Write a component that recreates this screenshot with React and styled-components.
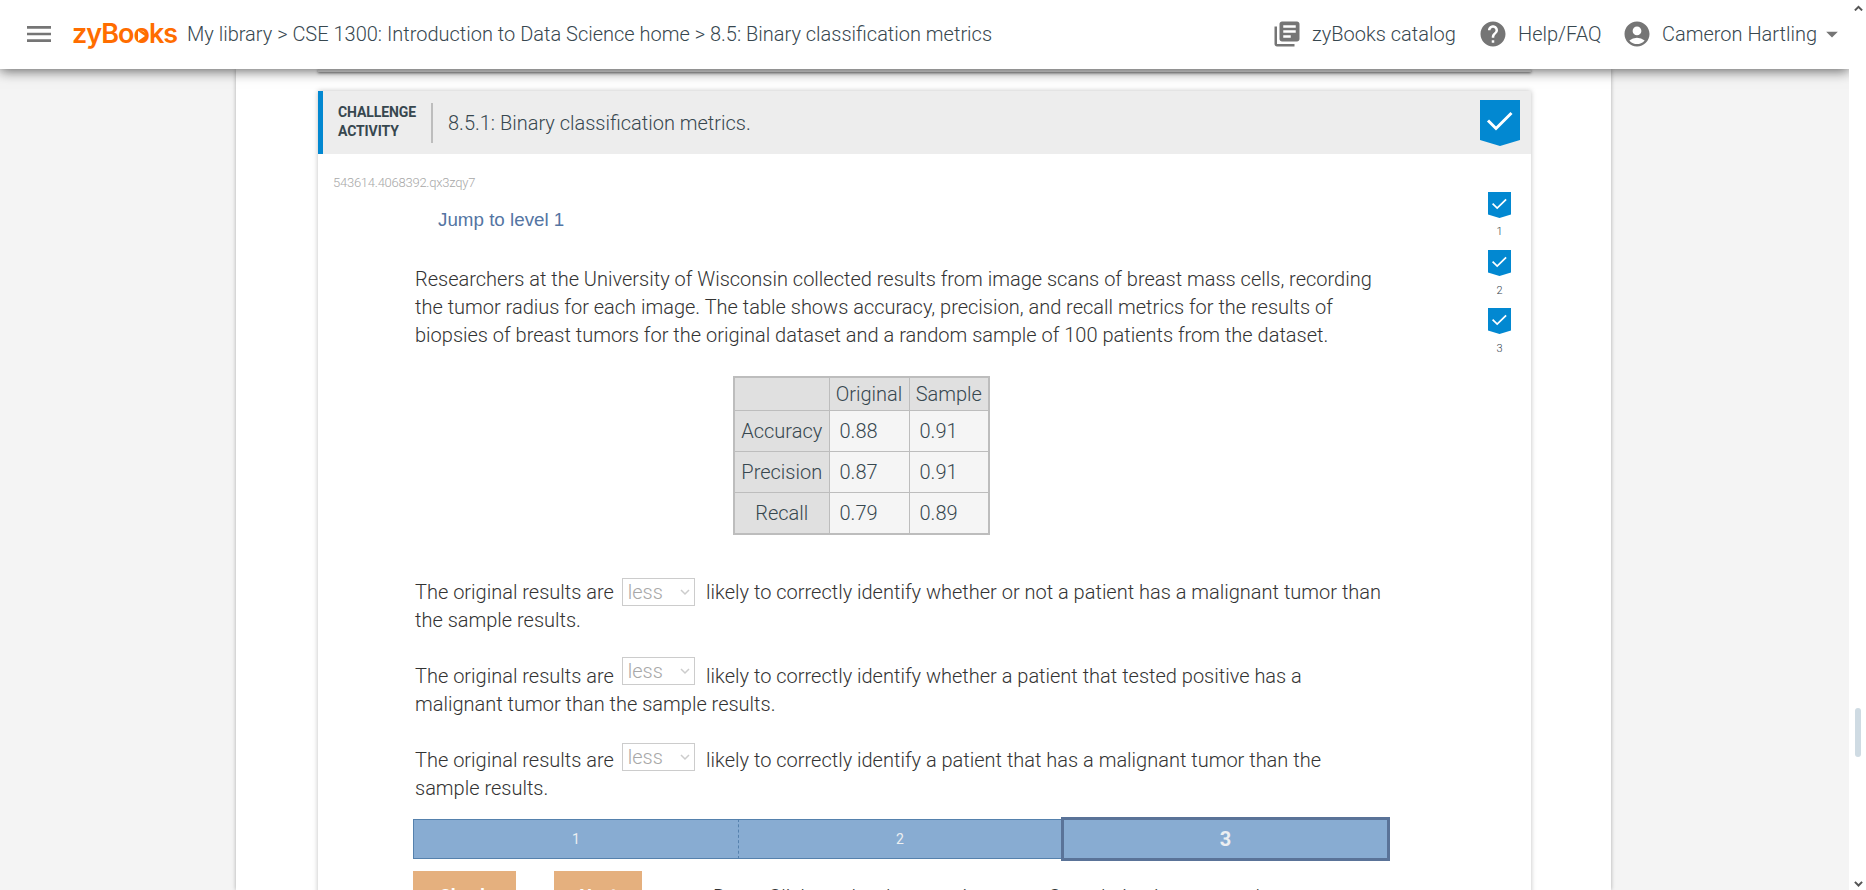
import React from "react";
import styled, { createGlobalStyle } from "styled-components";
import { MdLibraryBooks, MdHelp, MdAccountCircle, MdMenu, MdArrowDropDown } from "react-icons/md";

const Global = createGlobalStyle`
  * { box-sizing: border-box; }
  body { margin: 0; background: #fff; overflow: hidden; font-family: Roboto, "Liberation Sans", sans-serif; font-weight: 300; font-size: 20px; color: #37474f; }
`;

const Screen = styled.div`
  display: grid;
  grid-template-columns: 1849px 17px;
  height: 890px;
  overflow: hidden;
`;
const Page = styled.div`
  display: flex;
  flex-direction: column;
  height: 890px;
  overflow: hidden;
  background: #f4f4f4;
`;
const TopBar = styled.header`
  display: flex;
  align-items: center;
  flex: none;
  height: 69px;
  padding: 0 3px 2px 23px;
  background: #fff;
  box-shadow: 0 2px 12px rgba(0, 0, 0, 0.6);
  position: relative;
  z-index: 2;
  white-space: nowrap;
  svg { color: #757575; flex: none; }
`;
const Logo = styled.span`
  margin-left: 17px;
  width: 115px;
  color: #ff6d00;
  font-family: Inter, Roboto, sans-serif;
  font-size: 27px;
  font-weight: 600;
  letter-spacing: -1px;
`;
const PlayLetter = styled.span`
  position: relative;
  &::before {
    content: "";
    position: absolute;
    left: 3px;
    bottom: 9px;
    width: 10px;
    height: 10px;
    border-radius: 5px;
    background: #ff6d00;
  }
  &::after {
    content: "";
    position: absolute;
    left: 5px;
    bottom: 9px;
    border: solid transparent;
    border-width: 5px 0 5px 7px;
    border-left-color: #fff;
  }
`;
const Crumbs = styled.span`
  flex: 1;
`;
const NavItem = styled.span`
  display: flex;
  align-items: center;
  gap: 10px;
  width: ${(p) => p.$width}px;
`;
const Sheet = styled.main`
  width: 1375px;
  height: 821px;
  margin-left: 236px;
  padding-left: 82px;
  background: #fff;
  box-shadow: 0 0 4px rgba(0, 0, 0, 0.3);
`;
const PreviousCard = styled.div`
  width: 1213px;
  height: 3px;
  margin-bottom: 19px;
  background: #e4e4e4;
  box-shadow: 0 1px 3px rgba(0, 0, 0, 0.55);
`;
const Card = styled.section`
  width: 1213px;
  height: 900px;
  background: #fff;
  box-shadow: 0 0 5px rgba(0, 0, 0, 0.25);
`;
const CardHead = styled.div`
  display: flex;
  align-items: center;
  height: 63px;
  padding-right: 11px;
  background: #ededed;
  border-left: 5px solid #0288d1;
`;
const Kind = styled.div`
  width: 94px;
  padding-left: 15px;
  font-size: 14px;
  font-weight: 700;
  letter-spacing: -0.1px;
  line-height: 19px;
  margin-top: -1px;
`;
const CardTitle = styled.div`
  flex: 1;
  height: 40px;
  line-height: 40px;
  margin-left: 14px;
  padding-left: 15px;
  border-left: 2px solid #bdbdbd;
`;
const CardBody = styled.div`
  display: flex;
  justify-content: space-between;
`;
const Content = styled.div`
  width: 1073px;
`;
const Code = styled.div`
  padding: 20px 0 0 15px;
  font-size: 13px;
  letter-spacing: -0.25px;
  line-height: 17px;
  color: #a8a8a8;
`;
const Jump = styled.div`
  padding: 17px 0 0 120px;
  font-family: "Liberation Sans", Arial, sans-serif;
  font-size: 18.8px;
  font-weight: 400;
  line-height: 24px;
  color: #5475a3;
`;
const Prompt = styled.p`
  width: 976px;
  margin: ${(p) => p.$top}px 0 0 97px;
  line-height: 28px;
  color: #333;
`;
const TableArea = styled.div`
  height: 186px;
  padding: 27px 0 0 415px;
`;
const Table = styled.table`
  width: 257px;
  border-collapse: collapse;
  border: 2px solid #bdbdbd;
  table-layout: fixed;
  th, td { border: 1px solid #bdbdbd; font-weight: 300; padding: 0; }
  th { background: #e0e0e0; text-align: center; height: 33px; }
  td { background: #f5f5f5; height: 41px; padding-left: 10px; }
  tr:last-child td { height: 42px; }
  th:first-child { width: 95px; }
  th:nth-child(2) { width: 80px; }
`;
const Select = styled.span`
  display: inline-flex;
  align-items: center;
  justify-content: space-between;
  width: 73px;
  height: 28px;
  margin: ${(p) => -p.$raise}px 6.5px ${(p) => p.$raise}px 3px;
  padding: 0 4px 0 5px;
  border: 1px solid #ccc;
  color: #a8a8a8;
  vertical-align: top;
`;
const Steps = styled.div`
  display: grid;
  grid-template-columns: 326px 322px 329px;
  align-items: center;
  height: 44px;
  margin: 15px 0 0 95px;
`;
const Step = styled.div`
  display: flex;
  align-items: center;
  justify-content: center;
  height: ${(p) => (p.$current ? 44 : 40)}px;
  background: #88acd2;
  border: ${(p) => (p.$current ? "3px solid #5a7398" : "1px solid #5581ad")};
  border-right: ${(p) => (p.$current ? "3px solid #5a7398" : p.$dash ? "1px dashed #5581ad" : "0")};
  border-left-width: ${(p) => (p.$current ? 3 : p.$dash ? 1 : 0)}px;
  color: #eceff1;
  font-size: ${(p) => (p.$current ? 20 : 14)}px;
  font-weight: ${(p) => (p.$current ? 700 : 400)};
`;
const Actions = styled.div`
  display: flex;
  height: 52px;
  margin: 10px 0 0 95px;
`;
const Button = styled.div`
  width: ${(p) => p.$width}px;
  margin-right: 38px;
  background: #e5b07e;
  color: #fff;
  font-size: 18px;
  font-weight: 700;
  line-height: 49px;
  text-align: center;
`;
const Feedback = styled.span`
  margin-left: 33px;
  line-height: 53px;
  color: #333;
`;
const Levels = styled.div`
  display: flex;
  flex-direction: column;
  width: 23px;
  margin: 38px 20px 0 0;
`;
const Level = styled.div`
  display: flex;
  flex-direction: column;
  align-items: center;
  height: 58px;
  font-size: 11px;
  line-height: 13px;
  gap: 8px;
  &:first-child { gap: 7px; }
  svg { display: block; }
`;
const Scroll = styled.div`
  display: flex;
  flex-direction: column;
  align-items: center;
  justify-content: space-between;
  padding: 5px 0 3px 1px;
  background: #fff;
  svg { display: block; }
`;
const Thumb = styled.div`
  width: 6px;
  height: 49px;
  margin-top: 697px;
  margin-bottom: auto;
  border-radius: 3px;
  background: #cfdbe3;
`;

const Ribbon = ({ w, h }) => (
  <svg width={w} height={h} viewBox="0 0 40 46" preserveAspectRatio="none">
    <path d="M0 0H40V40L20 46L0 40Z" fill="#0288d1" />
    <path d="M8 20.5L16 28.5L31.5 13" fill="none" stroke="#fff" strokeWidth="3" />
  </svg>
);
const Chevron = ({ up, size = 10, color = "#ccc", weight = 1.5 }) => (
  <svg width={size} height={size * 0.7} viewBox="0 0 10 7">
    <path d={up ? "M1 6L5 2L9 6" : "M1 1L5 5L9 1"} fill="none" stroke={color} strokeWidth={weight} />
  </svg>
);

const rows = [["Accuracy", "0.88", "0.91"], ["Precision", "0.87", "0.91"], ["Recall", "0.79", "0.89"]];
const questions = [
  { raise: 0, top: 43, end: <>likely to correctly identify whether or not a patient has a malignant tumor than<br />the sample results.</> },
  { raise: 5, top: 28, end: <>likely to correctly identify whether a patient that tested positive has a<br />malignant tumor than the sample results.</> },
  { raise: 3, top: 28, end: <>likely to correctly identify a patient that has a malignant tumor than the<br />sample results.</> },
];

export default function App() {
  return (
    <Screen>
      <Global />
      <Page>
        <TopBar>
          <MdMenu size={32} />
          <Logo>zyBo<PlayLetter>o</PlayLetter>ks</Logo>
          <Crumbs>My library &gt; CSE 1300: Introduction to Data Science home &gt; 8.5: Binary classification metrics</Crumbs>
          <NavItem $width={206}><MdLibraryBooks size={30} />zyBooks catalog</NavItem>
          <NavItem $width={144}><MdHelp size={30} />Help/FAQ</NavItem>
          <NavItem $width={196}><MdAccountCircle size={30} />Cameron Hartling</NavItem>
          <MdArrowDropDown size={28} />
        </TopBar>
        <Sheet>
          <PreviousCard />
          <Card>
            <CardHead>
              <Kind>CHALLENGE ACTIVITY</Kind>
              <CardTitle>8.5.1: Binary classification metrics.</CardTitle>
              <Ribbon w={40} h={46} />
            </CardHead>
            <CardBody>
              <Content>
                <Code>543614.4068392.qx3zqy7</Code>
                <Jump>Jump to level 1</Jump>
                <Prompt $top={33}>
                  Researchers at the University of Wisconsin collected results from image scans of breast mass cells, recording<br />
                  the tumor radius for each image. The table shows accuracy, precision, and recall metrics for the results of<br />
                  biopsies of breast tumors for the original dataset and a random sample of 100 patients from the dataset.
                </Prompt>
                <TableArea>
                  <Table>
                    <thead><tr><th /><th>Original</th><th>Sample</th></tr></thead>
                    <tbody>
                      {rows.map(([name, a, b]) => (
                        <tr key={name}><th>{name}</th><td>{a}</td><td>{b}</td></tr>
                      ))}
                    </tbody>
                  </Table>
                </TableArea>
                {questions.map((q, i) => (
                  <Prompt key={i} $top={q.top}>
                    The original results are <Select $raise={q.raise}>less<Chevron /></Select> {q.end}
                  </Prompt>
                ))}
                <Steps>
                  <Step $dash>1</Step>
                  <Step>2</Step>
                  <Step $current>3</Step>
                </Steps>
                <Actions>
                  <Button $width={103}>Check</Button>
                  <Button $width={88}>Next</Button>
                  <Feedback>Done. Click any level to practice more. Completion is preserved.</Feedback>
                </Actions>
              </Content>
              <Levels>
                {[1, 2, 3].map((n) => (
                  <Level key={n}><Ribbon w={23} h={26} />{n}</Level>
                ))}
              </Levels>
            </CardBody>
          </Card>
        </Sheet>
      </Page>
      <Scroll>
        <Chevron up size={9} color="#555" weight={2.2} />
        <Thumb />
        <Chevron size={9} color="#555" weight={2.2} />
      </Scroll>
    </Screen>
  );
}
